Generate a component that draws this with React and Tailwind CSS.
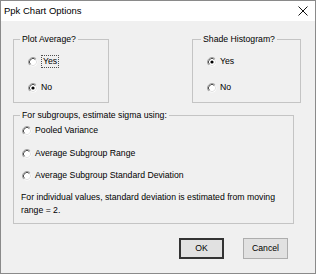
import React from 'react'

function Radio({ checked }) {
  return (
    <svg width="10" height="10" viewBox="0 0 10 10" className="shrink-0">
      <circle cx="5" cy="5" r="4.5" fill="#ffffff" />
      <path d="M1.8 8.2 A4.5 4.5 0 0 1 8.2 1.8" stroke="#a0a0a0" strokeWidth="1" fill="none" />
      <path d="M2.5 7.5 A3.5 3.5 0 0 1 7.5 2.5" stroke="#505050" strokeWidth="1" fill="none" />
      <path d="M7.5 2.5 A3.5 3.5 0 0 1 2.5 7.5" stroke="#e3e3e3" strokeWidth="1" fill="none" />
      {checked && <circle cx="5" cy="5" r="1.6" fill="#000000" />}
    </svg>
  )
}

function Option({ label, checked, focus, className = '' }) {
  return (
    <div className={`flex items-center h-[13px] gap-[3px] ${className}`}>
      <Radio checked={checked} />
      {focus ? (
        <span className="border border-dotted border-[#505050] px-px leading-[11px]">{label}</span>
      ) : (
        <span className="leading-[11px]">{label}</span>
      )}
    </div>
  )
}

export default function App() {
  return (
    <div
      className="w-[316px] h-[274px] bg-[#f0f0f0] border border-[#8a8a8a] flex flex-col text-black text-[8.7px]"
      style={{ fontFamily: '"Liberation Sans", Arial, sans-serif' }}
    >
      <div className="h-[20px] bg-white flex items-center justify-between pl-[3px] pr-[7px] shrink-0">
        <span className="text-[9.5px]">Ppk Chart Options</span>
        <svg width="10" height="10" viewBox="0 0 10 10">
          <path d="M0.5 0.5 L9.5 9.5 M9.5 0.5 L0.5 9.5" stroke="#111" strokeWidth="1" />
        </svg>
      </div>

      <div className="flex pt-[12px] pl-[12px]">
        <fieldset className="w-[96px] h-[70px] border border-[#c4c4c4]">
          <legend className="ml-[6px] px-[2px] leading-[12px]">Plot Average?</legend>
          <div className="pl-[14px] pt-[10px]">
            <Option label="Yes" focus />
            <Option label="No" checked className="mt-[13px]" />
          </div>
        </fieldset>
        <fieldset className="w-[109px] h-[70px] ml-[83px] border border-[#c4c4c4]">
          <legend className="ml-[8px] px-[2px] leading-[12px]">Shade Histogram?</legend>
          <div className="pl-[14px] pt-[10px]">
            <Option label="Yes" checked />
            <Option label="No" className="mt-[13px]" />
          </div>
        </fieldset>
      </div>

      <div className="pl-[12px] pt-[6px]">
        <fieldset className="w-[281px] h-[115px] border border-[#c4c4c4]">
          <legend className="ml-[6px] px-[2px] leading-[12px]">For subgroups, estimate sigma using:</legend>
          <div className="pl-[8px] pt-[3px]">
            <Option label="Pooled Variance" />
            <Option label="Average Subgroup Range" className="mt-[10px]" />
            <Option label="Average Subgroup Standard Deviation" className="mt-[9px]" />
          </div>
          <p className="pl-[7px] pt-[9px] w-[272px] leading-[13px]">
            For individual values, standard deviation is estimated from moving range = 2.
          </p>
        </fieldset>
      </div>

      <div className="flex pt-[14px] pl-[178px] gap-[19px]">
        <button className="w-[45px] h-[21px] bg-[#e1e1e1] border-2 border-[#333333] leading-none">OK</button>
        <button className="w-[45px] h-[21px] bg-[#e1e1e1] border border-[#adadad] leading-none">Cancel</button>
      </div>
    </div>
  )
}
